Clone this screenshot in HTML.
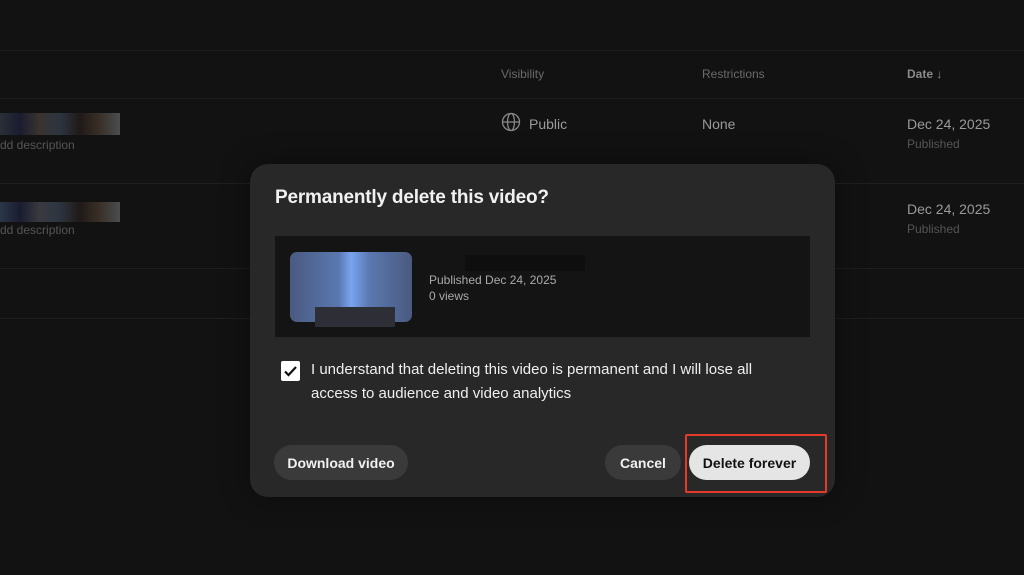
<!DOCTYPE html>
<html><head><style>
*{margin:0;padding:0;box-sizing:border-box}
body{width:1024px;height:575px;background:#121212;font-family:"Liberation Sans",sans-serif;position:relative;overflow:hidden;color:#fff}
.a{position:absolute}
.line{position:absolute;left:0;width:1024px;height:1px;background:#1f1f1f}
.h{font-size:12px;color:#6a6a6a}
.c{font-size:14px;color:#9a9a9a}
.s{font-size:12px;color:#555}
.btn{position:absolute;top:445px;height:35px;border-radius:18px;background:#3a3a3a;font-size:14px;font-weight:bold;color:#f1f1f1;display:flex;align-items:center;justify-content:center}
</style></head><body>
<div class="line" style="top:50px"></div>
<div class="line" style="top:98px"></div>
<div class="line" style="top:183px"></div>
<div class="line" style="top:268px"></div>
<div class="line" style="top:318px"></div>
<div class="a h" style="left:501px;top:67px">Visibility</div>
<div class="a h" style="left:702px;top:67px">Restrictions</div>
<div class="a h" style="left:907px;top:67px;color:#8a8a8a;font-weight:bold">Date ↓</div>
<div class="a" style="left:0;top:113px;width:120px;height:22px;background:linear-gradient(90deg,#2a3038,#1a1c30,#3a3430,#2c3440,#201a18,#3a3028,#4a4e50)"></div>
<div class="a s" style="left:0;top:138px">dd description</div>
<div class="a" style="left:0;top:202px;width:120px;height:20px;background:linear-gradient(90deg,#2a3848,#1a1c30,#3a3a40,#2c3440,#201a18,#3a3028,#4a4e50)"></div>
<div class="a s" style="left:0;top:223px">dd description</div>
<svg class="a" style="left:501px;top:112px" width="20" height="20" viewBox="0 0 20 20" fill="none" stroke="#888" stroke-width="1.3"><circle cx="10" cy="10" r="8.5"/><ellipse cx="10" cy="10" rx="3.5" ry="8.5"/><path d="M1.5 10h17"/></svg>
<div class="a c" style="left:529px;top:116px">Public</div>
<div class="a c" style="left:702px;top:116px">None</div>
<div class="a c" style="left:907px;top:116px">Dec 24, 2025</div>
<div class="a s" style="left:907px;top:137px">Published</div>
<div class="a c" style="left:907px;top:201px">Dec 24, 2025</div>
<div class="a s" style="left:907px;top:222px">Published</div>

<div class="a" style="left:250px;top:164px;width:585px;height:333px;background:#282828;border-radius:18px;box-shadow:0 0 30px rgba(0,0,0,.4)"></div>
<div class="a" style="left:275px;top:187px;font-size:19px;font-weight:bold;color:#f1f1f1;letter-spacing:-0.2px">Permanently delete this video?</div>
<div class="a" style="left:275px;top:236px;width:535px;height:101px;background:#141414"></div>
<div class="a" style="left:290px;top:252px;width:122px;height:70px;border-radius:7px;background:linear-gradient(90deg,#4a5a80 0%,#5a78b0 40%,#7aa4f0 50%,#5a78b0 65%,#4a5a80 100%)"></div>
<div class="a" style="left:315px;top:307px;width:80px;height:20px;background:#2e2e36"></div>
<div class="a" style="left:465px;top:255px;width:120px;height:16px;background:#0e0e0e"></div>
<div class="a" style="left:429px;top:273px;font-size:12px;color:#aaa">Published Dec 24, 2025</div>
<div class="a" style="left:429px;top:289px;font-size:12px;color:#aaa">0 views</div>
<div class="a" style="left:281px;top:361px;width:19px;height:20px;background:#fff;border-radius:2px"></div>
<svg class="a" style="left:281px;top:361px" width="19" height="20" viewBox="0 0 19 20"><path d="M4 10.5l3.5 3.5 7.5-8" fill="none" stroke="#111" stroke-width="2.2"/></svg>
<div class="a" style="left:311px;top:358px;width:470px;font-size:15px;line-height:24px;color:#eee">I understand that deleting this video is permanent and I will lose all access to audience and video analytics</div>
<div class="btn" style="left:274px;width:134px">Download video</div>
<div class="btn" style="left:605px;width:76px">Cancel</div>
<div class="btn" style="left:689px;width:121px;background:#e5e5e5;color:#111">Delete forever</div>
<div class="a" style="left:685px;top:434px;width:142px;height:59px;border:2px solid #e53a2a;border-radius:2px"></div>
</body></html>
